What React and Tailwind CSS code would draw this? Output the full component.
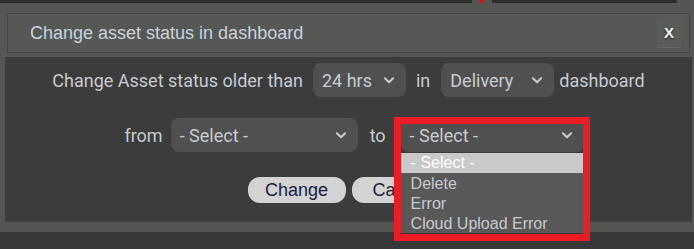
import React from "react";

const chevron = (
  <svg className="w-[14px] h-[14px]" viewBox="0 0 24 24" fill="none" stroke="currentColor" strokeWidth={3.5} strokeLinecap="round" strokeLinejoin="round">
    <path d="M5 9l7 7 7-7" />
  </svg>
);

function Select({ label, width }) {
  return (
    <div className={`${width} h-[34px] flex items-center justify-between pl-[9px] pr-[10px] rounded-[8px] bg-[#505050] text-[#c6cbd1]`}>
      <span>{label}</span>
      {chevron}
    </div>
  );
}

export default function App() {
  const options = ["Delete", "Error", "Cloud Upload Error"];

  return (
    <div className="w-[694px] h-[249px] bg-[#383838] overflow-hidden font-['Roboto',sans-serif] text-[18px]">
      {/* strip of the page behind */}
      <div className="h-[3px] flex bg-[#545654]">
        <div className="w-[472px] bg-[#2e2e2e]" />
        <div className="w-[20px] flex justify-center">
          <div className="w-[4px] h-[3px] bg-[#e01010]" />
        </div>
        <div className="w-[185px] bg-[#2e2e2e]" />
      </div>

      {/* dialog */}
      <div className="bg-[#545654] pl-[5px] pr-[2px] pb-[10px]">
        <div className="pt-[10px] pb-[4px] px-[2px]">
          <div className="h-[40px] border border-[#434443] bg-[#565856] flex items-center justify-between pl-[22px] pr-[8px]">
            <span className="font-['Liberation_Sans',Arial,sans-serif] text-[18px] text-[#c9d2dc]">
              Change asset status in dashboard
            </span>
            <div className="w-[24px] h-[30px] bg-[#595b59] flex items-center justify-center border-b border-[#636563]">
              <span className="font-['Liberation_Sans',Arial,sans-serif] font-bold text-[15px] leading-none text-[#f4f4f4] [text-shadow:0_1px_2px_#222]">
                X
              </span>
            </div>
          </div>
        </div>

        <div className="h-[165px] bg-[#3c3c3c] flex flex-col items-center text-[#c6cbd2]">
          <div className="mt-[6px] flex items-center">
            <span>Change Asset status older than</span>
            <div className="ml-[10px]">
              <Select label="24 hrs" width="w-[93px]" />
            </div>
            <span className="ml-[10px]">in</span>
            <div className="ml-[11px]">
              <Select label="Delivery" width="w-[113px]" />
            </div>
            <span className="ml-[5px]">dashboard</span>
          </div>

          <div className="mt-[21px] flex items-center pl-[11px]">
            <span>from</span>
            <div className="ml-[8px]">
              <Select label="- Select -" width="w-[187px]" />
            </div>
            <span className="ml-[12px]">to</span>
            <div className="ml-[15px] relative">
              <Select label="- Select -" width="w-[183px]" />
              <div className="absolute left-0 top-[35px] w-[183px] h-[80px] bg-[#585858] font-['Liberation_Sans',Arial,sans-serif] text-[16px] leading-[20px] z-10">
                <div className="h-[20px] bg-[#c9c9c9] text-white pl-[10px]">- Select -</div>
                {options.map((o) => (
                  <div key={o} className="h-[20px] pl-[10px] pt-[1px] text-[#c6cbd1]">
                    {o}
                  </div>
                ))}
              </div>
              <div className="absolute left-[-7px] top-[-1px] w-[196px] h-[124px] border-[7px] border-[#ec1c24] z-20" />
            </div>
          </div>

          <div className="mt-[25px] flex gap-[6px] font-['Liberation_Sans',Arial,sans-serif] text-[18px]">
            <button className="w-[98px] h-[26px] rounded-[12px] bg-[#d3d3d3] text-[#1c1c3c] leading-none">Change</button>
            <button className="w-[98px] h-[26px] rounded-[12px] bg-[#d3d3d3] text-[#1c1c3c] leading-none">Cancel</button>
          </div>
        </div>
      </div>
    </div>
  );
}
